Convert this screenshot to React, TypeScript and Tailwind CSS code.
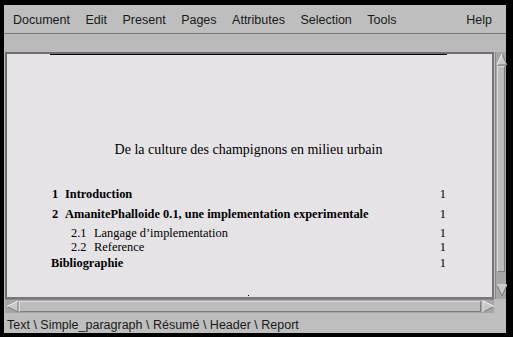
import React from "react"

const menus = ["Document", "Edit", "Present", "Pages", "Attributes", "Selection", "Tools"]

interface TocRow {
  num?: string
  label: string
  page: string
  bold?: boolean
  sub?: boolean
  mt: string
}

const rows: TocRow[] = [
  { num: "1", label: "Introduction", page: "1", bold: true, mt: "mt-[28px]" },
  { num: "2", label: "AmanitePhalloide 0.1, une implementation experimentale", page: "1", bold: true, mt: "mt-[6px]" },
  { num: "2.1", label: "Langage d\u2019implementation", page: "1", sub: true, mt: "mt-[5px]" },
  { num: "2.2", label: "Reference", page: "1", sub: true, mt: "mt-0" },
  { label: "Bibliographie", page: "1", bold: true, mt: "mt-[2px]" },
]

function Arrow({ dir }: { dir: "up" | "down" | "left" | "right" }) {
  // motif-ish 3D triangle
  const pts = {
    up: "6,1 1,12 11,12",
    down: "1,1 11,1 6,12",
    left: "1,6.5 12,1 12,12",
    right: "1,1 12,6.5 1,12",
  }[dir]
  return (
    <svg width="12" height="13" viewBox="0 0 12 13" className="block">
      <polygon points={pts} fill="#c9c9c9" stroke="#7a7a7a" strokeWidth="1" />
      {dir === "up" && <polyline points="6,1 1,12" stroke="#f2f2f2" strokeWidth="1.2" fill="none" />}
      {dir === "down" && <polyline points="1,1 11,1" stroke="#f2f2f2" strokeWidth="1.2" fill="none" />}
      {dir === "left" && <polyline points="12,1 1,6.5" stroke="#f2f2f2" strokeWidth="1.2" fill="none" />}
      {dir === "right" && <polyline points="1,12 1,1 12,6.5" stroke="#f2f2f2" strokeWidth="1.2" fill="none" />}
    </svg>
  )
}

export default function App() {
  return (
    <div className="w-[513px] h-[337px] bg-black pt-[5px] pl-[4px] pr-[7px] pb-[4px] overflow-hidden" style={{ fontFamily: '"Liberation Sans", Arial, sans-serif' }}>
      <div className="flex flex-col h-full bg-[#bebebe]">
        {/* menu bar */}
        <div className="h-[29px] flex items-center pt-[2px] pl-[9px] pr-[14px] gap-[15.5px] border-b border-[#7a7a7a] text-[12.5px] text-[#1a1a1a] shrink-0">
          {menus.map(m => (
            <span key={m}>{m}</span>
          ))}
          <span className="ml-auto">Help</span>
        </div>
        {/* empty tool strip */}
        <div className="h-[18px] bg-[#bababa] shrink-0" />

        {/* document + vertical scrollbar */}
        <div className="h-[247px] flex shrink-0">
          <div className="ml-[1px] w-[490px] border-2 border-t-[#6e6e6e] border-l-[#6e6e6e] border-r-[#777] border-b-[#777] bg-[#e6e3e6] flex" style={{ fontFamily: '"Liberation Serif", "Times New Roman", serif' }}>
            <div className="ml-[43px] w-[397px] border-t border-black flex flex-col text-black">
              <div className="mt-[86px] text-center text-[14px] leading-[18px]">De la culture des champignons en milieu urbain</div>
              {rows.map(r => (
                <div key={r.label} className={`${r.mt} flex items-center leading-[14px] ${r.bold ? "text-[12.4px]" : "text-[12.4px]"}`}>
                  {r.num ? (
                    <span className={`${r.sub ? "pl-[21px] w-[44px]" : "pl-[2px] w-[15px]"} ${r.bold ? "font-bold" : ""}`}>{r.num}</span>
                  ) : (
                    <span className="pl-[1px]" />
                  )}
                  <span className={`flex-1 ${r.bold ? "font-bold" : ""}`}>{r.label}</span>
                  <span className="pr-[1px]">{r.page}</span>
                </div>
              ))}
              <div className="mt-auto mb-[1px] self-center w-[1px] h-[1px] bg-black" />
            </div>
          </div>
          <div className="ml-[1px] w-[11px] flex flex-col bg-[#a6a6a6] border-l border-[#8a8a8a] pt-[1px] pb-[2px]">
            <Arrow dir="up" />
            <div className="h-[206px] mx-[1px] bg-[#bcbcbc] border-t border-l border-[#dcdcdc] border-b border-r border-b-[#7d7d7d] border-r-[#7d7d7d]" />
            <div className="flex-1" />
            <Arrow dir="down" />
          </div>
        </div>

        {/* horizontal scrollbar */}
        <div className="h-[14px] ml-[1px] w-[489px] flex items-center bg-[#a6a6a6] border-t border-[#8a8a8a] shrink-0">
          <div className="pl-[1px]">
            <Arrow dir="left" />
          </div>
          <div className="flex-1 h-[11px] mx-[1px] bg-[#bcbcbc] border-t border-l border-[#dcdcdc] border-b border-r border-b-[#7d7d7d] border-r-[#7d7d7d]" />
          <Arrow dir="right" />
        </div>

        <div className="h-[4px] shrink-0" />

        {/* status bar */}
        <div className="h-[16px] pl-[3px] flex items-center text-[12.5px] text-[#1a1a1a] whitespace-nowrap shrink-0">
          Text \ Simple_paragraph \ Résumé \ Header \ Report
        </div>
      </div>
    </div>
  )
}
